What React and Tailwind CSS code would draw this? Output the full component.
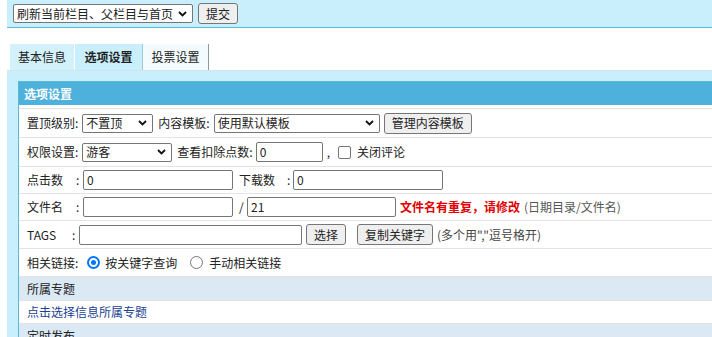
import React from 'react';

const Chevron = () => (
    <svg width="9" height="6" viewBox="0 0 9 6" className="shrink-0">
        <path d="M1 1l3.5 3.5L8 1" fill="none" stroke="#111" strokeWidth="1.8" />
    </svg>
);

const FakeSelect = ({ className, children }) => (
    <div className={`flex h-[19px] items-center justify-between rounded-[2px] border border-[#767676] bg-white pl-[3px] pr-[5px] ${className}`}>
        <span className="leading-none">{children}</span>
        <Chevron />
    </div>
);

const Btn = ({ className = '', children }) => (
    <div className={`flex h-[21px] items-center justify-center rounded-[3px] border border-[#767676] bg-[#efefef] px-[6px] leading-none ${className}`}>
        {children}
    </div>
);

const Field = ({ className, value = '' }) => (
    <div className={`flex h-[20px] items-center rounded-[2px] border border-[#767676] bg-white px-[3px] leading-none ${className}`}>
        {value}
    </div>
);

const Radio = ({ checked }) =>
    checked ? (
        <div className="flex h-[13px] w-[13px] items-center justify-center rounded-full border-2 border-[#0075ff] bg-white">
            <div className="h-[5px] w-[5px] rounded-full bg-[#0075ff]" />
        </div>
    ) : (
        <div className="h-[13px] w-[13px] rounded-full border border-[#767676] bg-white" />
    );

const Row = ({ h, blue, children }) => (
    <div className={`flex items-center border-t border-[#e3e3e3] pl-[8px] ${h} ${blue ? 'bg-[#dbe9f5]' : 'bg-white'}`}>
        {children}
    </div>
);

export default function App() {
    return (
        <div className="h-[337px] w-[712px] overflow-hidden bg-white text-[12px] text-[#222] font-['Microsoft_YaHei','Noto_Sans_CJK_SC',sans-serif]">
            {/* top action bar */}
            <div className="ml-[7px] flex h-[28px] w-[720px] items-center gap-[5px] border-b border-[#5ab9d8] bg-[#c9effc] pl-[6px]">
                <FakeSelect className="w-[180px]">刷新当前栏目、父栏目与首页</FakeSelect>
                <Btn className="w-[40px]">提交</Btn>
            </div>

            {/* tabs */}
            <div className="mt-[16px] flex h-[26px] pl-[10px]">
                <div className="flex w-[64px] items-center justify-center bg-[#d3f1fb]">基本信息</div>
                <div className="ml-[1px] flex w-[68px] items-center justify-center border-r border-[#9fc9d9] bg-[#c9effc] font-bold">选项设置</div>
                <div className="flex w-[66px] items-center justify-center border-r border-[#8a9aa3] bg-[#f4fbfe]">投票设置</div>
            </div>

            {/* panel */}
            <div className="ml-[7px] w-[740px] border-t border-[#d3e3ea] bg-[#c9effc] pl-[11px] pt-[10px]">
                <div className="border border-[#5ab9d8]">
                    <div className="flex h-[23px] items-center bg-[#4eb1dc] pl-[5px] font-bold text-white">选项设置</div>
                    <div className="h-[3px] bg-white" />

                    <Row h="h-[29px]">
                        <span>置顶级别:</span>
                        <FakeSelect className="ml-[4px] w-[71px]">不置顶</FakeSelect>
                        <span className="ml-[5px]">内容模板:</span>
                        <FakeSelect className="ml-[4px] w-[166px]">使用默认模板</FakeSelect>
                        <Btn className="ml-[4px] w-[88px]">管理内容模板</Btn>
                    </Row>

                    <Row h="h-[29px]">
                        <span>权限设置:</span>
                        <FakeSelect className="ml-[4px] w-[90px]">游客</FakeSelect>
                        <span className="ml-[5px]">查看扣除点数:</span>
                        <Field className="ml-[3px] w-[67px]" value="0" />
                        <span className="ml-[4px]">,</span>
                        <div className="ml-[8px] h-[13px] w-[13px] rounded-[2px] border border-[#767676] bg-white" />
                        <span className="ml-[6px]">关闭评论</span>
                    </Row>

                    <Row h="h-[27px]">
                        <span className="w-[49px]">点击数</span>
                        <span className="w-[7px]">:</span>
                        <Field className="w-[150px]" value="0" />
                        <span className="ml-[6px] w-[48px]">下载数</span>
                        <span className="w-[6px]">:</span>
                        <Field className="w-[150px]" value="0" />
                    </Row>

                    <Row h="h-[27px]">
                        <span className="w-[49px]">文件名</span>
                        <span className="w-[7px]">:</span>
                        <Field className="w-[150px]" />
                        <span className="ml-[6px] w-[8px]">/</span>
                        <Field className="w-[149px]" value="21" />
                        <span className="ml-[4px] font-bold text-[#e00000]">文件名有重复，请修改</span>
                        <span className="ml-[4px] text-[#555]">(日期目录/文件名)</span>
                    </Row>

                    <Row h="h-[28px]">
                        <span className="w-[45px]">TAGS</span>
                        <span className="w-[7px]">:</span>
                        <Field className="w-[223px]" />
                        <Btn className="ml-[4px] w-[40px]">选择</Btn>
                        <Btn className="ml-[11px] w-[76px]">复制关键字</Btn>
                        <span className="ml-[4px] text-[#444]">(多个用","逗号格开)</span>
                    </Row>

                    <Row h="h-[28px]">
                        <span>相关链接:</span>
                        <div className="ml-[9px]"><Radio checked /></div>
                        <span className="ml-[5px]">按关键字查询</span>
                        <div className="ml-[13px]"><Radio /></div>
                        <span className="ml-[6px]">手动相关链接</span>
                    </Row>

                    <Row h="h-[24px]" blue>
                        <span>所属专题</span>
                    </Row>

                    <Row h="h-[23px]">
                        <span className="text-[#1c3f94]">点击选择信息所属专题</span>
                    </Row>

                    <Row h="h-[24px]" blue>
                        <span>定时发布</span>
                    </Row>
                </div>
            </div>
        </div>
    );
}
